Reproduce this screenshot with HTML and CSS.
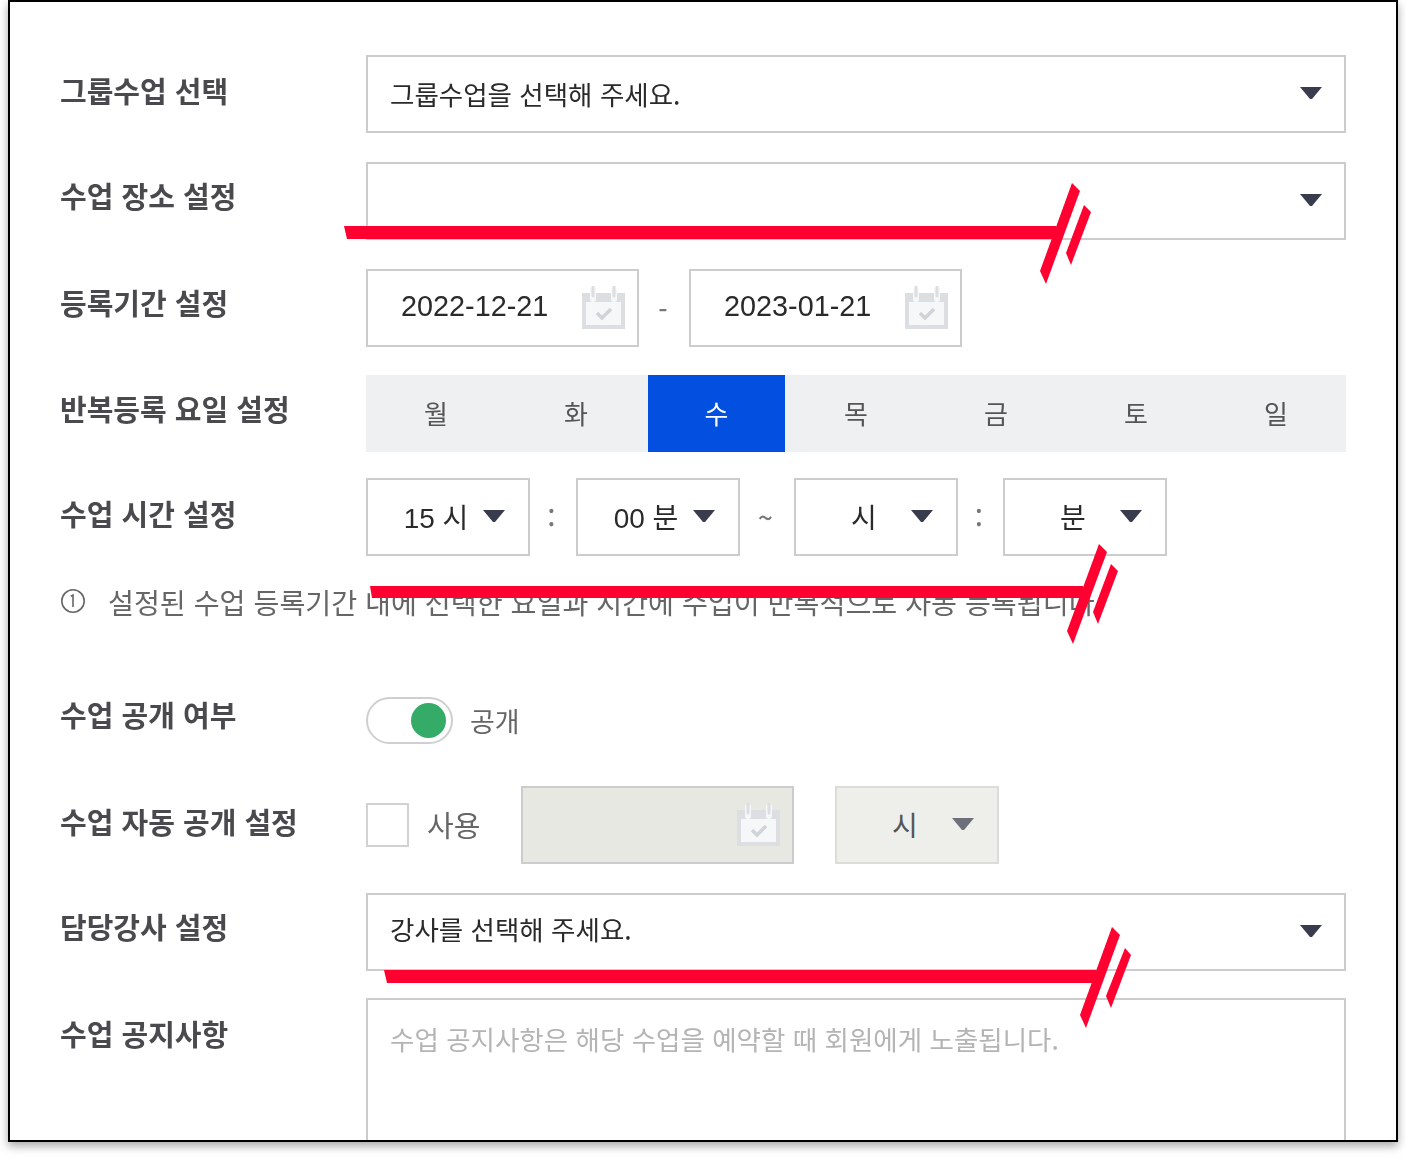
FILE: index.html
```html
<!DOCTYPE html>
<html lang="ko">
<head>
<meta charset="utf-8">
<title>수업 설정</title>
<link rel="stylesheet" href="styles.css">
</head>
<body>
<div class="frame">
  <form class="form">
    <div class="label low">그룹수업 선택</div>
    <div class="box select"><span class="grow">그룹수업을 선택해 주세요.</span><svg class="arrow" viewBox="0 0 22 12"><path d="M0 0H22L12 12H10Z"/></svg></div>

    <div class="label">수업 장소 설정</div>
    <div class="box select"><span class="grow"></span><svg class="arrow" viewBox="0 0 22 12"><path d="M0 0H22L12 12H10Z"/></svg></div>

    <div class="label">등록기간 설정</div>
    <div class="controls">
      <div class="box date"><span class="grow">2022-12-21</span><svg class="cal" viewBox="0 0 43 43"><use href="#cal"/></svg></div>
      <span class="dash">-</span>
      <div class="box date"><span class="grow">2023-01-21</span><svg class="cal" viewBox="0 0 43 43"><use href="#cal"/></svg></div>
    </div>

    <div class="label">반복등록 요일 설정</div>
    <div class="days">
      <span class="day">월</span><span class="day">화</span><span class="day on">수</span><span class="day">목</span><span class="day">금</span><span class="day">토</span><span class="day">일</span>
    </div>

    <div class="label low">수업 시간 설정</div>
    <div class="controls">
      <div class="box time"><span class="grow">15 시</span><svg class="arrow" viewBox="0 0 22 12"><path d="M0 0H22L12 12H10Z"/></svg></div>
      <span class="sep w46">:</span>
      <div class="box time"><span class="grow">00 분</span><svg class="arrow" viewBox="0 0 22 12"><path d="M0 0H22L12 12H10Z"/></svg></div>
      <span class="sep w54">~</span>
      <div class="box time"><span class="grow">시</span><svg class="arrow" viewBox="0 0 22 12"><path d="M0 0H22L12 12H10Z"/></svg></div>
      <span class="sep w45">:</span>
      <div class="box time"><span class="grow">분</span><svg class="arrow" viewBox="0 0 22 12"><path d="M0 0H22L12 12H10Z"/></svg></div>
    </div>

    <div class="note"><svg class="info" viewBox="0 0 26 26"><circle cx="13" cy="13" r="11.2"/><path d="M10.8 8.2L13 7V19"/></svg><span>설정된 수업 등록기간 내에 선택한 요일과 시간에 수업이 반복적으로 자동 등록됩니다.</span></div>

    <div class="label flush">수업 공개 여부</div>
    <div class="toggle-row">
      <span class="toggle"><span class="knob"></span></span>
      <span class="muted">공개</span>
    </div>

    <div class="label low">수업 자동 공개 설정</div>
    <div class="controls">
      <span class="check"></span>
      <span class="muted use">사용</span>
      <div class="box date disabled"><span class="grow"></span><svg class="cal" viewBox="0 0 43 43"><use href="#cal"/></svg></div>
      <div class="box time off"><span class="grow">시</span><svg class="arrow" viewBox="0 0 22 12"><path d="M0 0H22L12 12H10Z"/></svg></div>
    </div>

    <div class="label">담당강사 설정</div>
    <div class="box select raised"><span class="grow">강사를 선택해 주세요.</span><svg class="arrow" viewBox="0 0 22 12"><path d="M0 0H22L12 12H10Z"/></svg></div>

    <div class="label low">수업 공지사항</div>
    <div class="box area">수업 공지사항은 해당 수업을 예약할 때 회원에게 노출됩니다.</div>
  </form>
</div>

<svg class="defs" width="0" height="0" aria-hidden="true">
  <g id="cal">
    <path class="cal-body" d="M0 7H43V43H0Z"/>
    <path class="cal-paper" d="M4 16H39V39H4Z"/>
    <path class="cal-halo" d="M11 4V13M32 4V13"/>
    <path class="cal-ring" d="M11 1V10M32 1V10"/>
    <path class="cal-tick" d="M15 27L20 32L29 23"/>
  </g>
</svg>

<svg class="marks" viewBox="0 0 1406 1158" aria-hidden="true">
  <g>
    <path d="M344 226H1056V239H347Z"/>
    <path d="M1072 183L1080 191L1046 284L1040 271Z"/>
    <path d="M1084 205L1091 212L1071 265L1066 253Z"/>
  </g>
  <g>
    <path d="M370 586H1083V598H372Z"/>
    <path d="M1099 544L1107 552L1073 644L1067 631Z"/>
    <path d="M1111 564L1118 571L1098 624L1093 612Z"/>
  </g>
  <g>
    <path d="M384 970H1096V983H387Z"/>
    <path d="M1112 927L1120 935L1086 1028L1080 1015Z"/>
    <path d="M1125 948L1131 955L1111 1008L1106 996Z"/>
  </g>
</svg>
</body>
</html>
```
FILE: styles.css
```css
* { box-sizing: border-box; }

html, body {
  margin: 0;
  height: 1158px;
  overflow: hidden;
  background: #fff;
}

body {
  position: relative;
  font-family: "Noto Sans CJK KR", "Noto Sans", sans-serif;
  color: #222;
}

.frame {
  width: 1390px;
  height: 1142px;
  margin-left: 8px;
  border: 2px solid #000;
  background: #fff;
  overflow: hidden;
  box-shadow: 0 4px 9px rgba(0, 0, 0, 0.35);
}

.form {
  display: grid;
  grid-template-columns: 306px 980px;
  grid-template-rows: 107px 107px 106px 103px 106px 113px 89px 107px 105px 170px;
  align-items: start;
  padding: 53px 0 0 50px;
  filter: blur(0.55px);
}

.label {
  padding-top: 13px;
  font-size: 29px;
  line-height: 40px;
  font-weight: 700;
  color: #4a4a4e;
  white-space: nowrap;
}

.label.low { padding-top: 15px; }
.label.flush { margin-top: -3px; padding-top: 0; }

.box {
  display: flex;
  align-items: center;
  height: 78px;
  border: 2px solid #cccccc;
  background: #fff;
  font-size: 26.5px;
  color: #2a2a2a;
}

.grow { flex: 1; white-space: nowrap; }

.select { padding: 0 22px; }
.select .grow { padding-bottom: 2px; }
.select .arrow { margin-top: -2px; }
.raised .grow { padding-bottom: 7px; }

.arrow { display: block; width: 22px; height: 12px; flex: none; fill: #383c4c; }

.controls { display: flex; align-items: center; }

.date {
  width: 273px;
  padding: 0 12px 0 33px;
  font-family: "Liberation Sans", "Noto Sans CJK KR", sans-serif;
  font-size: 28.8px;
}

.date .grow { padding-bottom: 4px; }

.cal { display: block; width: 43px; height: 43px; flex: none; margin-top: -2px; }
.cal-body { fill: #dcdee1; }
.cal-paper { fill: #f6f7f8; }
.cal-halo { fill: none; stroke: #f6f7f8; stroke-width: 6; stroke-linecap: round; }
.cal-ring { fill: none; stroke: #dcdee1; stroke-width: 3; stroke-linecap: round; }
.cal-tick { fill: none; stroke: #d0d3d7; stroke-width: 3.5; }

.dash {
  width: 50px;
  padding-right: 2px;
  text-align: center;
  font-size: 26px;
  font-weight: 500;
  color: #777;
}

.days {
  display: grid;
  grid-template-columns: repeat(7, 140px);
  height: 77px;
  background: #eff0f1;
}

.day {
  display: flex;
  align-items: center;
  justify-content: center;
  padding-bottom: 3px;
  font-size: 26px;
  color: #555;
}

.day.on { margin: 0 1px 0 2px; background: #0350e0; color: #fff; }

.time {
  width: 164px;
  padding: 0 23px 0 21px;
  font-family: "Liberation Sans", "Noto Sans CJK KR", sans-serif;
  font-size: 28px;
}

.time .grow { padding-bottom: 2px; text-align: center; }
.time .arrow { margin-top: -3px; }

.sep {
  padding: 0 3px 2px 0;
  text-align: center;
  font-size: 26px;
  font-weight: 500;
  color: #777;
}

.w45 { width: 45px; }
.w46 { width: 46px; }
.w54 { width: 54px; }

.note {
  grid-column: 1 / -1;
  display: flex;
  align-items: center;
  gap: 22px;
  height: 36px;
  margin-top: -1px;
  font-size: 28.2px;
  color: #666;
  white-space: nowrap;
}

.info { width: 26px; height: 26px; flex: none; fill: none; stroke: #666; stroke-width: 1.6; }

.toggle-row {
  display: flex;
  align-items: center;
  gap: 17px;
}

.toggle {
  display: flex;
  align-items: center;
  justify-content: flex-end;
  width: 87px;
  height: 47px;
  padding-right: 5px;
  border: 2px solid #cfcfcf;
  border-radius: 24px;
}

.knob {
  width: 35px;
  height: 35px;
  border-radius: 50%;
  background: #35ab68;
}

.muted { font-size: 27px; color: #666; }

.check {
  width: 43px;
  height: 44px;
  border: 2px solid #d2d2d2;
}

.use { width: 94px; margin-left: 18px; padding-bottom: 2px; font-size: 29px; white-space: nowrap; }

.box.disabled {
  background: #e8e8e3;
  justify-content: flex-end;
}

.box.off {
  margin-left: 41px;
  background: #eeefea;
  border-color: #dcdcd8;
  color: #555;
}

.off .arrow { fill: #6d6f7a; }

.disabled .cal-paper,
.disabled .cal-halo { fill: #e8e8e3; stroke: #e8e8e3; }
.disabled .cal-paper { stroke: none; }

.area {
  align-items: flex-start;
  height: 170px;
  padding: 19px 22px;
  color: #b4b4b4;
}

.defs { position: absolute; }

.marks {
  position: absolute;
  left: 0;
  top: 0;
  width: 1406px;
  height: 1158px;
  fill: #ff0030;
}
```
